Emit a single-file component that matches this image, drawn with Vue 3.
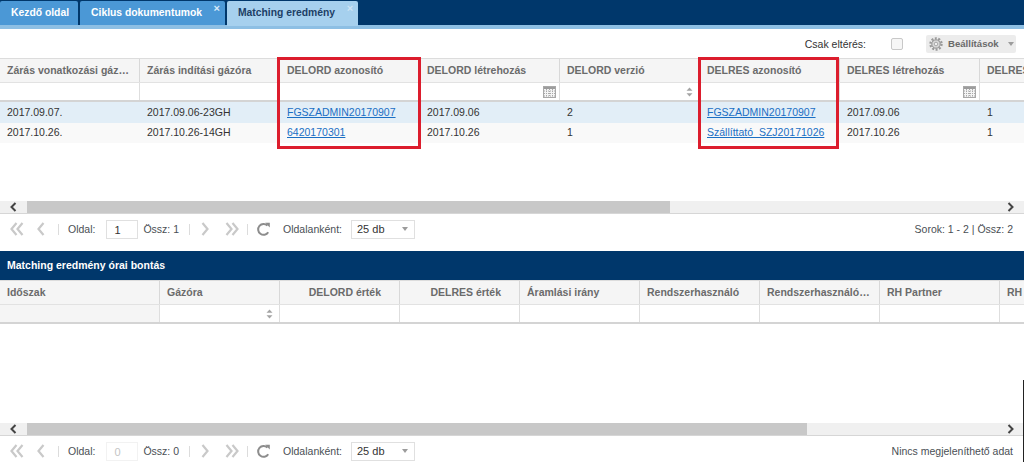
<template>
  <div class="page">
    <div class="tabbar">
      <div v-for="tab in tabs" :key="tab.label" class="tab" :class="{ active: tab.active, closable: tab.close }">
        {{ tab.label }}
        <span v-if="tab.close" class="tab-close">×</span>
      </div>
    </div>

    <div class="toolbar">
      <span class="only-diff">Csak eltérés:</span>
      <span class="checkbox"></span>
      <div class="settings">
        <svg class="gear" width="14" height="14" viewBox="0 0 14 14">
          <circle cx="7" cy="7" r="5.600" fill="none" stroke="#9a9a9a" stroke-width="2.200" stroke-dasharray="2 1.500" />
          <circle cx="7" cy="7" r="4.200" fill="#dadada" stroke="#8e8e8e" />
          <circle cx="7" cy="7" r="1.800" fill="#efefef" stroke="#9a9a9a" stroke-width="0.800" />
        </svg>
        <span>Beállítások</span>
        <i class="caret"></i>
      </div>
    </div>

    <div class="table-wrap top">
      <div class="grid top-cols head">
        <div v-for="c in topCols" :key="c" class="cell">{{ c }}</div>
      </div>
      <div class="grid top-cols filter">
        <div v-for="(c, i) in topCols" :key="c" class="cell">
          <svg v-if="i === 3 || i === 6" class="cal" width="13" height="12" viewBox="0 0 13 12">
            <rect x="0.5" y="0.5" width="12" height="11" fill="#f4f4f4" stroke="#a8a8a8" />
            <rect x="1" y="1" width="11" height="2" fill="#9c9c9c" />
            <path d="M1 5h11M1 7.500h11M1 10h11M3.500 3v8M6.500 3v8M9.500 3v8" stroke="#a8a8a8" stroke-dasharray="1 1" fill="none" />
          </svg>
          <svg v-if="i === 4" class="spin" width="7" height="10" viewBox="0 0 7 10">
            <path d="M3.500 0.500 6.500 3.800H0.500Z M3.500 9.500 0.500 6.200H6.500Z" fill="#a4a4a4" />
          </svg>
        </div>
      </div>
      <div v-for="(row, r) in topRows" :key="r" class="grid top-cols row" :class="{ selected: r === 0 }">
        <div v-for="(v, i) in row" :key="i" class="cell">
          <a v-if="i === 2 || i === 5" href="#" @click.prevent>{{ v }}</a>
          <template v-else>{{ v }}</template>
        </div>
      </div>
      <div class="mark mark-a"></div>
      <div class="mark mark-b"></div>
    </div>

    <div class="hscroll">
      <svg class="arr" width="8" height="10" viewBox="0 0 8 10"><path d="M6 1 2 5l4 4" fill="none" stroke="#444" stroke-width="2" /></svg>
      <div class="track"><div class="thumb thumb-top"></div></div>
      <svg class="arr" width="8" height="10" viewBox="0 0 8 10"><path d="M2 1l4 4-4 4" fill="none" stroke="#444" stroke-width="2" /></svg>
    </div>

    <div class="pager top-pager">
      <svg class="p-icon first" width="14" height="14" viewBox="0 0 14 14"><path :d="dblLeft" /></svg>
      <svg class="p-icon prev" width="8" height="14" viewBox="0 0 8 14"><path :d="oneLeft" /></svg>
      <i class="sep"></i>
      <span class="lbl">Oldal:</span>
      <span class="page-input">1</span>
      <span class="lbl total">Össz: 1</span>
      <i class="sep sep2"></i>
      <svg class="p-icon next" width="8" height="14" viewBox="0 0 8 14"><path :d="oneRight" /></svg>
      <svg class="p-icon last" width="14" height="14" viewBox="0 0 14 14"><path :d="dblRight" /></svg>
      <i class="sep sep3"></i>
      <svg class="refresh" width="15" height="15" viewBox="0 0 15 15">
        <path d="M12.200 10.200A5.400 5.400 0 1 1 11.400 3.600" fill="none" stroke="#8d8d8d" stroke-width="2" />
        <path d="M9.200 0.800h4.600v4.800Z" fill="#8d8d8d" />
      </svg>
      <span class="lbl per-page">Oldalanként:</span>
      <div class="select">25 db<i class="caret"></i></div>
      <span class="summary">Sorok: 1 - 2 | Össz: 2</span>
    </div>

    <div class="section-title">Matching eredmény órai bontás</div>

    <div class="table-wrap bottom">
      <div class="grid bottom-cols head">
        <div v-for="(c, i) in bottomCols" :key="c" class="cell" :class="{ num: i === 2 || i === 3 }">{{ c }}</div>
      </div>
      <div class="grid bottom-cols filter">
        <div v-for="(c, i) in bottomCols" :key="c" class="cell" :class="{ blank: i === 0 }">
          <svg v-if="i === 1" class="spin" width="7" height="10" viewBox="0 0 7 10">
            <path d="M3.500 0.500 6.500 3.800H0.500Z M3.500 9.500 0.500 6.200H6.500Z" fill="#a4a4a4" />
          </svg>
        </div>
      </div>
    </div>

    <div class="hscroll">
      <svg class="arr" width="8" height="10" viewBox="0 0 8 10"><path d="M6 1 2 5l4 4" fill="none" stroke="#444" stroke-width="2" /></svg>
      <div class="track"><div class="thumb thumb-bottom"></div></div>
      <svg class="arr" width="8" height="10" viewBox="0 0 8 10"><path d="M2 1l4 4-4 4" fill="none" stroke="#444" stroke-width="2" /></svg>
    </div>

    <div class="pager">
      <svg class="p-icon first" width="14" height="14" viewBox="0 0 14 14"><path :d="dblLeft" /></svg>
      <svg class="p-icon prev" width="8" height="14" viewBox="0 0 8 14"><path :d="oneLeft" /></svg>
      <i class="sep"></i>
      <span class="lbl">Oldal:</span>
      <span class="page-input disabled">0</span>
      <span class="lbl total">Össz: 0</span>
      <i class="sep sep2"></i>
      <svg class="p-icon next" width="8" height="14" viewBox="0 0 8 14"><path :d="oneRight" /></svg>
      <svg class="p-icon last" width="14" height="14" viewBox="0 0 14 14"><path :d="dblRight" /></svg>
      <i class="sep sep3"></i>
      <svg class="refresh" width="15" height="15" viewBox="0 0 15 15">
        <path d="M12.200 10.200A5.400 5.400 0 1 1 11.400 3.600" fill="none" stroke="#8d8d8d" stroke-width="2" />
        <path d="M9.200 0.800h4.600v4.800Z" fill="#8d8d8d" />
      </svg>
      <span class="lbl per-page">Oldalanként:</span>
      <div class="select">25 db<i class="caret"></i></div>
      <span class="summary">Nincs megjeleníthető adat</span>
    </div>

    <i class="edge"></i>
  </div>
</template>

<script setup>
const tabs = [
  { label: 'Kezdő oldal' },
  { label: 'Ciklus dokumentumok', close: true },
  { label: 'Matching eredmény', close: true, active: true }
]

const topCols = [
  'Zárás vonatkozási gáz…',
  'Zárás indítási gázóra',
  'DELORD azonosító',
  'DELORD létrehozás',
  'DELORD verzió',
  'DELRES azonosító',
  'DELRES létrehozás',
  'DELRES verzió'
]

const topRows = [
  ['2017.09.07.', '2017.09.06-23GH', 'FGSZADMIN20170907', '2017.09.06', '2', 'FGSZADMIN20170907', '2017.09.06', '1'],
  ['2017.10.26.', '2017.10.26-14GH', '6420170301', '2017.10.26', '1', 'Szállíttató_SZJ20171026', '2017.10.26', '1']
]

const bottomCols = [
  'Időszak',
  'Gázóra',
  'DELORD érték',
  'DELRES érték',
  'Áramlási irány',
  'Rendszerhasználó',
  'Rendszerhasználó…',
  'RH Partner',
  'RH'
]

// pager chevrons
const oneLeft = 'M6.500 1 1.500 7l5 6'
const oneRight = 'M1.500 1l5 6-5 6'
const dblLeft = 'M6.500 1 1.500 7l5 6M12.500 1l-5 6 5 6'
const dblRight = 'M1.500 1l5 6-5 6M7.500 1l5 6-5 6'
</script>

<style>
html,
body {
  margin: 0;
  background: #fff;
  overflow: hidden;
}
</style>

<style scoped>
.page {
  position: relative;
  width: 1024px;
  height: 462px;
  overflow: hidden;
  font-family: "Liberation Sans", Arial, sans-serif;
  font-size: 10.5px;
  color: #333;
  background: #fff;
}
.edge {
  position: absolute;
  right: 0;
  top: 380px;
  bottom: 0;
  width: 1px;
  background: #222;
}

/* tabs */
.tabbar {
  display: flex;
  gap: 2px;
  height: 25px;
  padding-top: 1px;
  box-sizing: border-box;
  background: #00376b;
  box-shadow: 0 4px 0 #8dbfe4;
  margin-bottom: 4px;
}
.tab {
  position: relative;
  height: 24px;
  line-height: 23px;
  padding: 0 10px 0 11px;
  background: #4b98d6;
  color: #fff;
  font-size: 10.350px;
  font-weight: bold;
  border-radius: 2px 2px 0 0;
}
.tab:first-child {
  padding-right: 9px;
}
.tab.closable {
  padding-right: 23px;
}
.tab.active {
  background: #a6d0ee;
  color: #1d3f66;
  height: 25px;
}
.tab-close {
  position: absolute;
  top: 0;
  right: 5px;
  line-height: 14px;
  font-size: 11px;
  font-weight: bold;
  color: #d7ebfa;
}
.tab.active .tab-close {
  color: #cfe4f5;
}

/* toolbar */
.toolbar {
  display: flex;
  align-items: center;
  height: 29px;
  padding-right: 8px;
  justify-content: flex-end;
}
.only-diff {
  margin-right: 25px;
}
.checkbox {
  width: 10px;
  height: 10px;
  border: 1px solid #c8c8c8;
  border-radius: 2px;
  background: #f6f6f6;
  margin-right: 23px;
}
.settings {
  display: flex;
  align-items: center;
  width: 90px;
  height: 18px;
  box-sizing: border-box;
  padding-left: 3px;
  gap: 5px;
  background: #ececec;
  border-radius: 2px;
  font-size: 9.600px;
  font-weight: bold;
  color: #6a6a6a;
}
.gear {
  flex: none;
}
.settings .caret {
  margin-left: 4px;
}
.caret {
  display: inline-block;
  width: 0;
  height: 0;
  border-left: 3px solid transparent;
  border-right: 3px solid transparent;
  border-top: 4px solid #9c9c9c;
}

/* tables */
.table-wrap {
  position: relative;
}
.table-wrap.top {
  height: 143px;
}
.table-wrap.bottom {
  height: 143px;
  overflow: hidden;
}
.grid {
  display: grid;
  width: 1024px;
  overflow: hidden;
}
.top-cols {
  grid-template-columns: repeat(8, 140px);
}
.bottom-cols {
  grid-template-columns: 160px repeat(8, 120px);
}
.cell {
  box-sizing: border-box;
  white-space: nowrap;
  overflow: hidden;
  padding-left: 7px;
  position: relative;
}
.head {
  height: 24px;
  background: #f5f5f5;
  border-top: 1px solid #dcdcdc;
  box-sizing: border-box;
  font-weight: bold;
  color: #6b6b6b;
}
.head .cell {
  line-height: 22px;
  border-right: 1px solid #d8d8d8;
}
.head .cell.num {
  text-align: right;
  padding-right: 18px;
}
.filter {
  height: 20px;
  box-sizing: border-box;
  border-top: 1px solid #e2e2e2;
  border-bottom: 2px solid #d4d4d4;
}
.filter .cell {
  border-right: 1px solid #dedede;
}
.filter .cell.blank {
  background: #f5f5f5;
}
.cal {
  position: absolute;
  right: 3px;
  top: 3px;
}
.spin {
  position: absolute;
  right: 6px;
  top: 4px;
}
.row {
  height: 20px;
  line-height: 19px;
  background: #f9f9f9;
  color: #333;
}
.row.selected {
  height: 21px;
  line-height: 21px;
  background: #e2eef7;
}
.row a {
  color: #1a6fc4;
  text-decoration: underline;
}
.mark {
  position: absolute;
  top: -1px;
  height: 92px;
  box-sizing: border-box;
  border: 3px solid #dc1d2d;
  pointer-events: none;
}
.mark-a {
  left: 277px;
  width: 144px;
}
.mark-b {
  left: 698px;
  width: 141px;
}

/* horizontal scrollbars */
.hscroll {
  display: flex;
  align-items: center;
  height: 13px;
  background: #f0f0f0;
  border-bottom: 1px solid #d6d6d6;
  box-sizing: border-box;
}
.arr {
  width: 27px;
  flex: none;
}
.track {
  flex: 1;
  height: 100%;
}
.thumb {
  height: 100%;
  background: #c8c8c8;
}
.thumb-top {
  width: 643px;
}
.thumb-bottom {
  width: 780px;
}

/* pager */
.pager {
  display: flex;
  align-items: center;
  height: 30px;
  padding-left: 10px;
  padding-right: 11px;
  color: #4a4f55;
}
.top-pager {
  margin-bottom: 7px;
}
.p-icon path {
  fill: none;
  stroke: #c9c9c9;
  stroke-width: 2.200;
}
.prev {
  margin-left: 13px;
}
.sep {
  width: 1px;
  height: 11px;
  background: #dcdcdc;
  margin-left: 13px;
  margin-right: 9px;
}
.sep2 {
  margin-left: 10px;
  margin-right: 11px;
}
.sep3 {
  margin-left: 8px;
  margin-right: 8px;
}
.last {
  margin-left: 16px;
}
.page-input {
  width: 32px;
  height: 19px;
  line-height: 18px;
  box-sizing: border-box;
  margin-left: 11px;
  padding-left: 7px;
  border: 1px solid #e0e0e0;
  color: #333;
  font-size: 11px;
}
.page-input.disabled {
  color: #c4c4c4;
  border-color: #f2f2f2;
}
.total {
  margin-left: 5px;
}
.per-page {
  margin-left: 12px;
}
.select {
  display: flex;
  align-items: center;
  justify-content: space-between;
  width: 64px;
  height: 19px;
  box-sizing: border-box;
  margin-left: 9px;
  padding: 0 6px 0 5px;
  border: 1px solid #e0e0e0;
  color: #333;
  font-size: 11px;
}
.summary {
  margin-left: auto;
}

.section-title {
  height: 29px;
  line-height: 28px;
  padding-left: 7px;
  background: #00376b;
  color: #fff;
  font-weight: bold;
}
</style>
